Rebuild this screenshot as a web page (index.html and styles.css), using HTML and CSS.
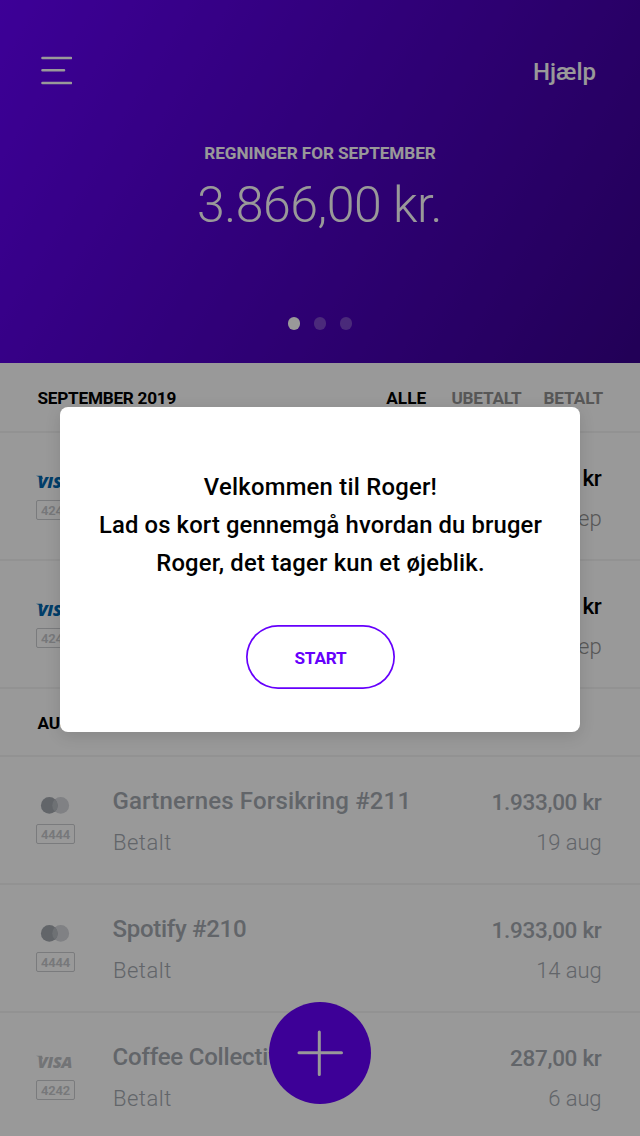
FILE: index.html
```html
<!DOCTYPE html>
<html lang="da">
<head>
<meta charset="utf-8">
<meta name="viewport" content="width=device-width, initial-scale=1">
<title>Roger</title>
<link rel="stylesheet" href="styles.css">
</head>
<body>
<div class="app">
  <header class="hero">
    <nav class="topbar">
      <svg class="menu" width="32" height="30" viewBox="0 0 32 30"><path d="M2.500 3H31M2.500 15.200H24M2.500 28H31"/></svg>
      <a class="help">Hjælp</a>
    </nav>
    <div class="hero-label">REGNINGER FOR SEPTEMBER</div>
    <div class="hero-amount">3.866,00 kr.</div>
    <div class="dots"><i class="dot on"></i><i class="dot"></i><i class="dot"></i></div>
  </header>
  <main>
    <div class="section first">
      <h2 class="month sept">SEPTEMBER 2019</h2>
      <div class="tabs"><span class="tab-alle">ALLE</span><span class="tab-ubetalt off">UBETALT</span><span class="tab-betalt off">BETALT</span></div>
    </div>
    <div class="row unpaid">
      <div class="card"><svg class="brand visa" viewBox="0 0 40 22"><path d="M0 3.700H6L7 7.200Q4 4.700 0 3.700Z"/><text x="1.500" y="15.700" textLength="35">VISA</text></svg><span class="digits">4242</span></div>
      <div class="what"></div>
      <div class="cost"><div class="price">kr</div><div class="date">sep</div></div>
    </div>
    <div class="row unpaid">
      <div class="card"><svg class="brand visa" viewBox="0 0 40 22"><path d="M0 3.700H6L7 7.200Q4 4.700 0 3.700Z"/><text x="1.500" y="15.700" textLength="35">VISA</text></svg><span class="digits">4242</span></div>
      <div class="what"></div>
      <div class="cost"><div class="price">kr</div><div class="date">sep</div></div>
    </div>
    <div class="section"><h2 class="month">AUGUST 2019</h2></div>
    <div class="row">
      <div class="card"><svg class="brand mc" viewBox="0 0 40 22"><circle class="mc-r" cx="24.700" cy="9.400" r="8.400"/><circle class="mc-l" cx="13.300" cy="9.400" r="8.400"/><path class="mc-m" d="M19 3.200A8.400 8.400 0 0 1 19 15.600A8.400 8.400 0 0 1 19 3.200Z"/></svg><span class="digits">4444</span></div>
      <div class="what"><div class="name n1">Gartnernes Forsikring #211</div><div class="state">Betalt</div></div>
      <div class="cost"><div class="price">1.933,00 kr</div><div class="date">19 aug</div></div>
    </div>
    <div class="row">
      <div class="card"><svg class="brand mc" viewBox="0 0 40 22"><circle class="mc-r" cx="24.700" cy="9.400" r="8.400"/><circle class="mc-l" cx="13.300" cy="9.400" r="8.400"/><path class="mc-m" d="M19 3.200A8.400 8.400 0 0 1 19 15.600A8.400 8.400 0 0 1 19 3.200Z"/></svg><span class="digits">4444</span></div>
      <div class="what"><div class="name n2">Spotify #210</div><div class="state">Betalt</div></div>
      <div class="cost"><div class="price">1.933,00 kr</div><div class="date">14 aug</div></div>
    </div>
    <div class="row">
      <div class="card"><svg class="brand visa" viewBox="0 0 40 22"><path d="M0 3.700H6L7 7.200Q4 4.700 0 3.700Z"/><text x="1.500" y="15.700" textLength="35">VISA</text></svg><span class="digits">4242</span></div>
      <div class="what"><div class="name n3">Coffee Collective</div><div class="state">Betalt</div></div>
      <div class="cost"><div class="price">287,00 kr</div><div class="date">6 aug</div></div>
    </div>
  </main>
  <button class="fab"><svg width="102" height="102" viewBox="0 0 102 102"><path d="M30 50.700H72.500M50.300 30V72.500"/></svg></button>
  <div class="overlay">
    <section class="modal">
      <p class="message"><span class="m1">Velkommen til Roger!</span><span class="m2">Lad os kort gennemgå hvordan du bruger</span><span class="m3">Roger, det tager kun et øjeblik.</span></p>
      <button class="start">START</button>
    </section>
  </div>
</div>
</body>
</html>
```
FILE: styles.css
```css
* { box-sizing: border-box; }
body { margin: 0; font-family: Roboto, "Liberation Sans", sans-serif; }
.app { position: relative; width: 640px; height: 1136px; overflow: hidden; background: #fff; color: #000; }
.hero { height: 363px; padding-top: 52px; background: linear-gradient(121deg, #6600fc 0%, #390090 100%); color: #fff; display: flex; flex-direction: column; align-items: center; }
.topbar { width: 100%; height: 40px; padding: 0 44px 0 40px; display: flex; justify-content: space-between; align-items: center; }
.menu { fill: none; stroke: #fff; stroke-width: 2.600; stroke-linecap: round; margin-bottom: 5px; }
.help { font-size: 24px; line-height: 40px; font-weight: 500; letter-spacing: 0; }
.hero-label { margin-top: 51px; font-size: 17.200px; line-height: 20px; font-weight: 700; white-space: nowrap; letter-spacing: -0.080px; }
.hero-amount { margin-top: 12px; padding-right: 1px; font-size: 50px; line-height: 60px; font-weight: 300; white-space: nowrap; letter-spacing: -0.450px; }
.dots { display: flex; gap: 13.400px; margin-top: 82px; }
.dot { width: 12.600px; height: 12.600px; border-radius: 50%; background: rgba(255,255,255,.28); }
.dot.on { background: #fff; }
.section { height: 68px; padding: 2px 37px 0 37.500px; display: flex; justify-content: space-between; align-items: center; border-bottom: 2px solid #f4f4f4; font-size: 17.200px; font-weight: 700; }
.section.first { height: 70px; }
.month { margin: 0; font-size: 17.200px; line-height: 20px; font-weight: 700; letter-spacing: -0.250px; }
.tabs { display: flex; line-height: 20px; }
.tab-alle { margin-right: 25px; letter-spacing: 0.1px; }
.tab-ubetalt { margin-right: 22px; letter-spacing: -0.2px; }
.tab-betalt { letter-spacing: -0.1px; }
.off { color: #919191; }
.row { height: 128px; padding: 0 38.500px 0 36px; display: flex; border-bottom: 2px solid #f4f4f4; color: #a4a9b0; }
.card { width: 76.500px; padding-top: 38.500px; display: flex; flex-direction: column; align-items: flex-start; }
.brand { width: 40px; height: 22px; overflow: visible; }
.visa { fill: #bfc1c5; }
.visa text { font-family: "Open Sans", sans-serif; font-size: 16.500px; font-style: italic; font-weight: 800; }
.mc-r { fill: #d5d7dc; }
.mc-l { fill: #a4a9b0; }
.mc-m { fill: #b8bcc2; }
.digits { margin-top: 6.500px; width: 39px; height: 20px; border: 1px solid #cbcdd0; border-radius: 2px; font-size: 13px; line-height: 20px; font-weight: 600; text-align: center; letter-spacing: -0.2px; color: #c6c8cc; }
.unpaid .digits { margin-top: 6px; }
.what { flex: 1; }
.name { padding-top: 28px; font-size: 24px; line-height: 32px; font-weight: 500; white-space: nowrap; }
.n1 { letter-spacing: 0.160px; }
.n2 { letter-spacing: -0.3px; }
.n3 { letter-spacing: -0.2px; }
.state { margin-top: 10px; padding-left: 0.5px; font-size: 22px; line-height: 32px; font-weight: 300; letter-spacing: 0.5px; }
.cost { text-align: right; white-space: nowrap; }
.price { padding-top: 29px; font-size: 22.500px; line-height: 32px; font-weight: 500; letter-spacing: -0.3px; }
.date { margin-top: 9px; font-size: 22px; line-height: 32px; font-weight: 300; letter-spacing: -0.1px; }
.unpaid .price { color: #000; }
.unpaid .date { color: #919191; }
.unpaid .visa { fill: #0068b0; }
.fab { position: absolute; left: 269px; top: 1002px; width: 102px; height: 102px; padding: 0; border: 0; border-radius: 50%; background: #6600fc; }
.fab svg { display: block; fill: none; stroke: #fff; stroke-width: 3; stroke-linecap: round; }
.overlay { position: absolute; inset: 0; background: rgba(0,0,0,.4); display: flex; justify-content: center; align-items: flex-start; padding-top: 407px; }
.modal { width: 520px; height: 325px; border-radius: 8px; background: #fff; box-shadow: 0 4px 16px rgba(0,0,0,.12); padding-top: 61px; display: flex; flex-direction: column; align-items: center; }
.message { margin: 0; padding-left: 1px; display: flex; flex-direction: column; align-items: center; font-size: 23.800px; line-height: 38px; font-weight: 500; white-space: nowrap; }
.m1 { letter-spacing: 0.250px; }
.m2 { letter-spacing: 0.130px; }
.m3 { letter-spacing: 0.2px; }
.start { margin: 43px 0 0 1px; width: 149px; height: 64px; border: 0; border-radius: 32px; box-shadow: inset 0 0 0 1.700px #6600fc; background: #fff; color: #6600fc; font: 700 17.200px/20px Roboto, sans-serif; letter-spacing: -0.2px; padding: 2px 0 0; }
```
